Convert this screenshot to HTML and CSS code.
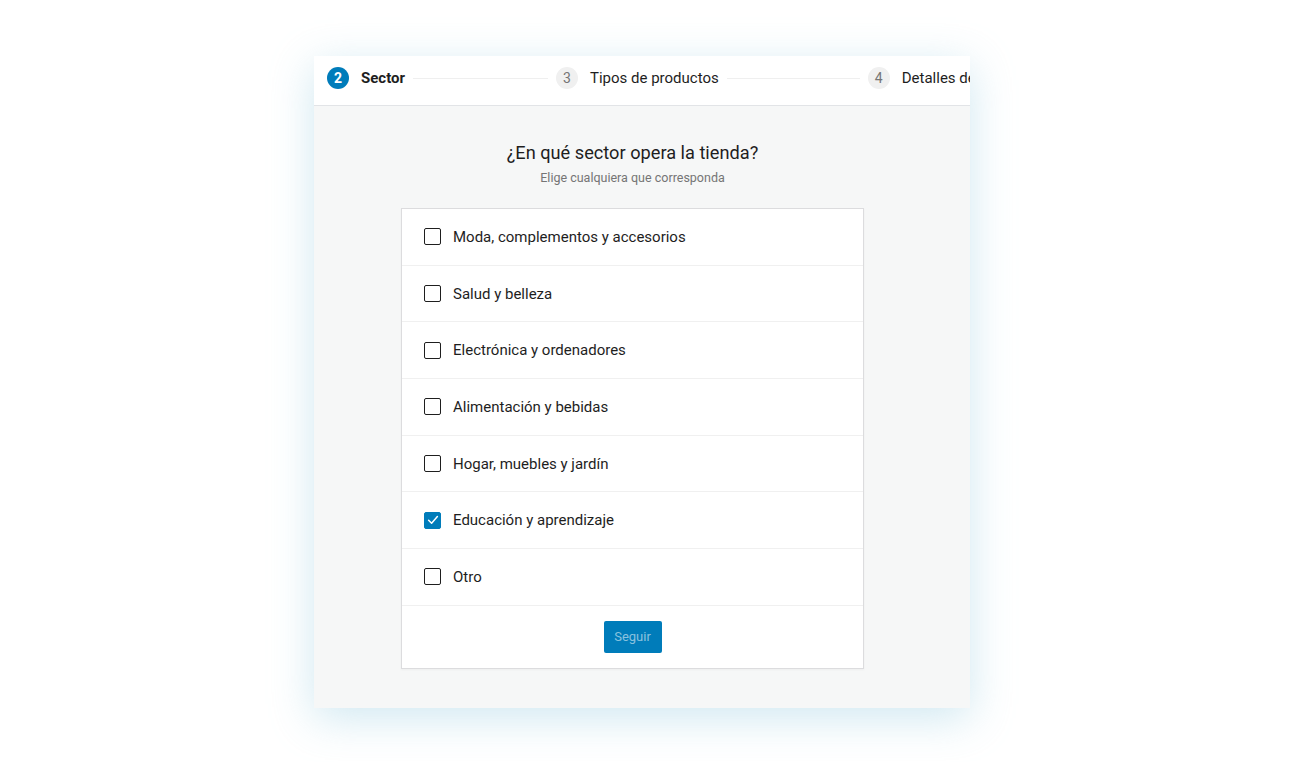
FILE: index.html
```html
<!DOCTYPE html>
<html lang="es">
<head>
<meta charset="utf-8">
<link rel="stylesheet" href="styles.css">
</head>
<body>
<div class="window">
  <div class="steps">
    <div class="step active"><span class="num">2</span><span class="label">Sector</span></div>
    <div class="line"></div>
    <div class="step"><span class="num">3</span><span class="label">Tipos de productos</span></div>
    <div class="line short"></div>
    <div class="step"><span class="num">4</span><span class="label">Detalles del negocio</span></div>
    <div class="line"></div>
  </div>
  <div class="content">
    <h1 class="title">¿En qué sector opera la tienda?</h1>
    <p class="subtitle">Elige cualquiera que corresponda</p>
    <div class="card">
      <div class="row"><span class="box"></span><span class="text">Moda, complementos y accesorios</span></div>
      <div class="row"><span class="box"></span><span class="text">Salud y belleza</span></div>
      <div class="row"><span class="box"></span><span class="text">Electrónica y ordenadores</span></div>
      <div class="row"><span class="box"></span><span class="text">Alimentación y bebidas</span></div>
      <div class="row"><span class="box"></span><span class="text">Hogar, muebles y jardín</span></div>
      <div class="row"><span class="box checked"><svg viewBox="0 0 18 18" width="18" height="18"><path d="M4.6 9.2 L7.6 12.2 L13.4 5.6" fill="none" stroke="#fff" stroke-width="1.5" stroke-linecap="round" stroke-linejoin="round"/></svg></span><span class="text">Educación y aprendizaje</span></div>
      <div class="row"><span class="box"></span><span class="text">Otro</span></div>
      <div class="footer"><button class="btn">Seguir</button></div>
    </div>
  </div>
</div>
</body>
</html>
```
FILE: styles.css
```css
html, body {
  margin: 0;
  padding: 0;
  background: #ffffff;
}
body {
  font-family: Roboto, "Noto Sans", "Liberation Sans", sans-serif;
  color: #1e1e1e;
  padding: 56px 0 0 314px;
  height: 762px;
  box-sizing: border-box;
  overflow: hidden;
}
.window {
  width: 656px;
  height: 652px;
  background: #f6f7f7;
  box-shadow: 0 10px 40px rgba(150, 205, 225, 0.45);
  display: flex;
  flex-direction: column;
}
.steps {
  height: 50px;
  background: #fff;
  border-bottom: 1px solid #e2e4e7;
  display: flex;
  align-items: center;
  padding-left: 13px;
  padding-bottom: 5px;
  box-sizing: border-box;
  overflow: hidden;
  white-space: nowrap;
  flex-shrink: 0;
}
.step {
  display: flex;
  align-items: center;
  gap: 12px;
  flex-shrink: 0;
}
.num {
  width: 22px;
  height: 22px;
  border-radius: 50%;
  background: #f0f0f0;
  color: #757575;
  font-size: 14px;
  display: flex;
  align-items: center;
  justify-content: center;
}
.label {
  font-size: 15px;
  color: #1e1e1e;
}
.step.active .num {
  background: #007cba;
  color: #fff;
  font-weight: 700;
}
.step.active .label {
  font-weight: 700;
}
.line {
  flex: 0 0 135px;
  height: 1px;
  background: #efefef;
  margin: 0 8px;
}
.line.short {
  flex-basis: 133px;
}
.content {
  display: flex;
  flex-direction: column;
  align-items: center;
  padding-top: 35px;
  padding-right: 19px;
}
.title {
  margin: 0;
  font-size: 18.2px;
  font-weight: 400;
  line-height: 24px;
  color: #1e1e1e;
}
.subtitle {
  margin: 5px 0 0;
  font-size: 12.5px;
  line-height: 16px;
  color: #757575;
}
.card {
  margin-top: 22px;
  width: 461px;
  background: #fff;
  border: 1px solid #dcdcde;
  box-shadow: 0 1px 2px rgba(0,0,0,0.04);
}
.row {
  height: 55.7px;
  border-bottom: 1px solid #f0f0f0;
  display: flex;
  align-items: center;
  padding-left: 22px;
  gap: 12px;
}
.box {
  width: 15px;
  height: 15px;
  border: 1.5px solid #1e1e1e;
  border-radius: 2px;
  box-sizing: content-box;
  position: relative;
  flex-shrink: 0;
}
.box.checked {
  background: #007cba;
  border-color: #007cba;
}
.box svg {
  position: absolute;
  left: -1.5px;
  top: -1.5px;
}
.text {
  font-size: 15px;
  color: #1e1e1e;
}
.footer {
  height: 62px;
  display: flex;
  justify-content: center;
  align-items: flex-start;
  padding-top: 15px;
  box-sizing: border-box;
}
.btn {
  width: 58px;
  height: 32px;
  background: #007cba;
  border: none;
  border-radius: 2px;
  color: rgba(255,255,255,0.55);
  font-family: Roboto, "Noto Sans", "Liberation Sans", sans-serif;
  font-size: 13px;
  padding: 0;
}
```
